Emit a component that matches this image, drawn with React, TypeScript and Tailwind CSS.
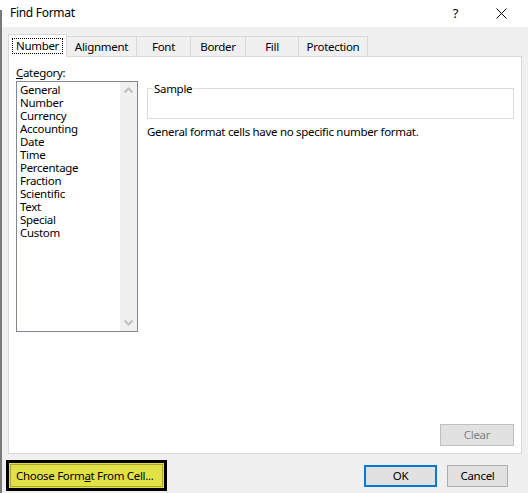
import React from "react";

const font = { fontFamily: '"Segoe UI", "Noto Sans", sans-serif', letterSpacing: "-0.3px" };

function Chevron({ up }: { up?: boolean }) {
  return (
    <svg width="17" height="17" viewBox="0 0 17 17">
      <polyline
        points={up ? "4.5,10.5 8.5,6.5 12.5,10.5" : "4.5,6.5 8.5,10.5 12.5,6.5"}
        fill="none"
        stroke="#c0c0c0"
        strokeWidth="2"
      />
    </svg>
  );
}

const items = [
  "General",
  "Number",
  "Currency",
  "Accounting",
  "Date",
  "Time",
  "Percentage",
  "Fraction",
  "Scientific",
  "Text",
  "Special",
  "Custom",
];

export default function App() {
  return (
    <div
      className="w-[528px] h-[493px] flex bg-white overflow-hidden text-[11.5px] text-black whitespace-nowrap"
      style={font}
    >
      <div className="w-[2px] flex flex-col">
        <div className="h-[10px] bg-white" />
        <div className="flex-1 bg-[#7a7a7a]" />
      </div>
      <div className="flex-1 flex flex-col">
        {/* title bar */}
        <div className="h-[27px] bg-white flex items-center pl-[8px] pb-px shrink-0">
          <span className="leading-none text-[12px]">Find Format</span>
          <span className="ml-auto mr-[38px] text-[13px] leading-none">?</span>
          <svg width="11" height="11" viewBox="0 0 11 11" className="mr-[21px]">
            <path d="M0.5 0.5 L10.5 10.5 M10.5 0.5 L0.5 10.5" stroke="#000" strokeWidth="1" />
          </svg>
        </div>
        {/* body */}
        <div className="flex-1 bg-[#f0f0f0] flex flex-col pl-[6px] pr-[6px] pt-[7px]">
          {/* tabs */}
          <div className="h-[23px] -mb-px relative z-10 flex items-end">
            <div className="h-[23px] w-[59px] bg-white border border-b-0 border-[#d9d9d9] flex items-start justify-center pt-[3px]">
              <span className="border border-dotted border-black px-[3px] h-[16px] leading-[14px]">
                Number
              </span>
            </div>
            <div className="h-[20px] mb-px w-[70px] border-t border-r border-[#d9d9d9] flex items-center justify-center pt-px">
              Alignment
            </div>
            <div className="h-[20px] mb-px w-[54px] border-t border-r border-[#d9d9d9] flex items-center justify-center pt-px">
              Font
            </div>
            <div className="h-[20px] mb-px w-[55px] border-t border-r border-[#d9d9d9] flex items-center justify-center pt-px">
              Border
            </div>
            <div className="h-[20px] mb-px w-[53px] border-t border-r border-[#d9d9d9] flex items-center justify-center pt-px">
              Fill
            </div>
            <div className="h-[20px] mb-px w-[69px] border-t border-r border-[#d9d9d9] flex items-center justify-center pt-px">
              Protection
            </div>
          </div>
          {/* panel */}
          <div className="h-[398px] bg-white border border-[#d9d9d9] flex flex-col px-[7px] pt-[8px] pb-[7px]">
            <div className="flex">
              <div className="flex flex-col w-[122px]">
                <div className="leading-[15px] h-[16px]">
                  <span className="underline">C</span>ategory:
                </div>
                <div className="h-[251px] border border-[#828790] flex">
                  <div className="flex-1 flex flex-col pt-px pl-[3px]">
                    {items.map((it) => (
                      <div key={it} className="leading-[13px] h-[13px]">
                        {it}
                      </div>
                    ))}
                  </div>
                  <div className="w-[17px] bg-[#f0f0f0] flex flex-col justify-between">
                    <Chevron up />
                    <Chevron />
                  </div>
                </div>
              </div>
              <div className="ml-[9px] flex-1 flex flex-col pt-[23px]">
                <div className="h-[31px] border border-[#dcdcdc] relative">
                  <span className="absolute left-[5px] -top-[8px] bg-white px-px leading-[15px]">
                    Sample
                  </span>
                </div>
                <div className="mt-[5px] leading-[15px]">
                  General format cells have no specific number format.
                </div>
              </div>
            </div>
            <div className="flex-1" />
            <div className="flex justify-end">
              <div className="w-[74px] h-[22px] bg-[#e1e1e1] border border-[#bfbfbf] text-[#838383] flex items-center justify-center">
                Clear
              </div>
            </div>
          </div>
          {/* bottom row */}
          <div className="flex items-start pt-[6px] -ml-[2px]">
            <div className="w-[161px] h-[31px] border-[3px] border-black bg-[#e1e146] p-px">
              <div className="h-full border border-[#a8a830] flex items-center pl-[5px]">
                <span>
                  Choose Form<span className="underline">a</span>t From Cell...
                </span>
              </div>
            </div>
            <div className="ml-auto mt-[5px] w-[73px] h-[22px] bg-[#e1e1e1] border-2 border-[#0078d7] flex items-center justify-center">
              OK
            </div>
            <div className="ml-[10px] mr-[14px] mt-[5px] w-[61px] h-[22px] bg-[#e1e1e1] border border-[#adadad] flex items-center justify-center">
              Cancel
            </div>
          </div>
        </div>
      </div>
    </div>
  );
}
